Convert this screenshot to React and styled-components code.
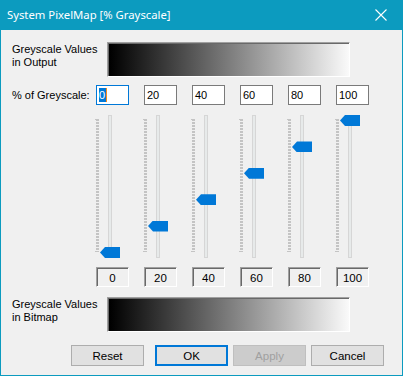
import styled, { createGlobalStyle } from "styled-components";

const GlobalStyle = createGlobalStyle`
  body {
    margin: 0;
    background: #f0f0f0;
  }
`;

const levels = [0, 20, 40, 60, 80, 100];

const App = () => {
  return (
    <>
      <GlobalStyle />
      <Window>
        <TitleBar>
          <Title>System PixelMap [% Grayscale]</Title>
          <CloseBtn>
            <svg width="12" height="12" viewBox="0 0 12 12">
              <path d="M0.5 0.5 L11.5 11.5 M11.5 0.5 L0.5 11.5" stroke="#fff" strokeWidth="1.1" />
            </svg>
          </CloseBtn>
        </TitleBar>
        <Body>
          <GradientRow>
            <WideLabel>
              Greyscale Values
              <br />
              in Output
            </WideLabel>
            <GradientBar />
          </GradientRow>

          <Row $top={8}>
            <Label>% of Greyscale:</Label>
            <Cells>
              {levels.map((v, i) => (
                <Input key={v} $focused={i === 0}>
                  {i === 0 ? (
                    <Selected>
                      {v}
                      <Caret />
                    </Selected>
                  ) : (
                    v
                  )}
                </Input>
              ))}
            </Cells>
          </Row>

          <Row $top={9}>
            <Label />
            <Cells>
              {levels.map((v) => (
                <Slider key={v}>
                  <Ticks />
                  <Track />
                  <Thumb style={{ top: 1 + (100 - v) * 1.32 }} />
                </Slider>
              ))}
            </Cells>
          </Row>

          <Row $top={9}>
            <Label />
            <Cells>
              {levels.map((v) => (
                <ValueBox key={v}>{v}</ValueBox>
              ))}
            </Cells>
          </Row>

          <GradientRow $top={10}>
            <WideLabel>
              Greyscale Values
              <br />
              in Bitmap
            </WideLabel>
            <GradientBar />
          </GradientRow>

          <ButtonRow>
            <Button>Reset</Button>
            <Button $default>OK</Button>
            <Button disabled>Apply</Button>
            <Button>Cancel</Button>
          </ButtonRow>
        </Body>
      </Window>
    </>
  );
};

const Window = styled.div`
  width: 403px;
  height: 376px;
  box-sizing: border-box;
  background: #f0f0f0;
  border: 1px solid #0c9bbf;
  border-top: none;
  display: flex;
  flex-direction: column;
  font-family: "Liberation Sans", Arial, sans-serif;
  font-size: 11px;
  color: #000;
`;

const TitleBar = styled.div`
  height: 30px;
  margin: 0 -1px;
  background: #0c9bbf;
  display: flex;
  align-items: center;
  justify-content: space-between;
  padding-left: 7px;
`;

const Title = styled.span`
  color: #fff;
  font-family: "Noto Sans", "Open Sans", sans-serif;
  font-size: 11.3px;
  margin-top: -2px;
`;

const CloseBtn = styled.div`
  width: 46px;
  height: 30px;
  display: flex;
  align-items: center;
  justify-content: center;
  margin-right: -1px;
`;

const Body = styled.div`
  display: flex;
  flex-direction: column;
  padding-left: 11px;
`;

const GradientRow = styled.div`
  display: flex;
  margin-top: ${(p) => p.$top ?? 12}px;
`;

const WideLabel = styled.div`
  width: 95px;
  line-height: 13px;
  padding-top: 1px;
`;

const GradientBar = styled.div`
  width: 243px;
  height: 35px;
  box-sizing: border-box;
  border: 1px solid;
  border-color: #a0a0a0 #fff #fff #a0a0a0;
  box-shadow: inset 1px 1px #696969;
  background: linear-gradient(to right, #000 2px, #fafafa);
`;

const Row = styled.div`
  display: flex;
  align-items: center;
  margin-top: ${(p) => p.$top}px;
`;

const Label = styled.div`
  width: 84px;
  flex-shrink: 0;
`;

const Cells = styled.div`
  display: flex;
  gap: 15px;
`;

const Input = styled.div`
  width: 33px;
  height: 20px;
  box-sizing: border-box;
  background: #fff;
  border: 1px solid ${(p) => (p.$focused ? "#0078d7" : "#7a7a7a")};
  padding-left: 2px;
  display: flex;
  align-items: center;
`;

const Selected = styled.span`
  position: relative;
  background: #0078d7;
  color: #fff;
  line-height: 14px;
  padding: 0 1px 0 0;
`;

const Caret = styled.span`
  position: absolute;
  right: -1px;
  top: 0;
  width: 1px;
  height: 14px;
  background: #f78a1e;
`;

const Slider = styled.div`
  position: relative;
  width: 33px;
  height: 144px;
  display: flex;
  align-items: flex-start;
`;

const Ticks = styled.div`
  position: relative;
  margin-top: 5px;
  width: 3px;
  height: 133px;
  background: repeating-linear-gradient(
    to bottom,
    #c4c4c4 0 2px,
    transparent 2px 3px
  );
  &::before,
  &::after {
    content: "";
    position: absolute;
    left: -1px;
    width: 4px;
    height: 1px;
    background: #c4c4c4;
  }
  &::before {
    top: 0;
  }
  &::after {
    bottom: 0;
  }
`;

const Track = styled.div`
  margin-left: 9px;
  margin-top: 1px;
  width: 4px;
  height: 143px;
  box-sizing: border-box;
  border: 1px solid #d6d6d6;
  background: #e7eaea;
`;

const Thumb = styled.div`
  position: absolute;
  left: 4px;
  width: 20px;
  height: 11px;
  background: #0078d7;
  clip-path: polygon(0 50%, 5px 0, 100% 0, 100% 100%, 5px 100%);
`;

const ValueBox = styled.div`
  width: 33px;
  height: 20px;
  box-sizing: border-box;
  border: 1px solid;
  border-color: #a0a0a0 #fff #fff #a0a0a0;
  box-shadow: inset 1px 1px #696969;
  background: #f0f0f0;
  display: flex;
  align-items: center;
  justify-content: center;
  padding-top: 1px;
  font-size: 11.5px;
`;

const ButtonRow = styled.div`
  display: flex;
  justify-content: flex-end;
  gap: 5px;
  margin-top: 13px;
  padding-right: 18px;
`;

const Button = styled.button`
  width: 73px;
  height: 21px;
  box-sizing: border-box;
  font-family: "Liberation Sans", Arial, sans-serif;
  font-size: 11.5px;
  color: #000;
  background: #e1e1e1;
  border: 1px solid #adadad;
  padding: 0;
  ${(p) =>
    p.$default &&
    `
    border: 2px solid #0078d7;
    margin-left: 6px;
  `}
  &:disabled {
    background: #cccccc;
    border-color: #bfbfbf;
    color: #a0a0a0;
  }
`;

export default App;
